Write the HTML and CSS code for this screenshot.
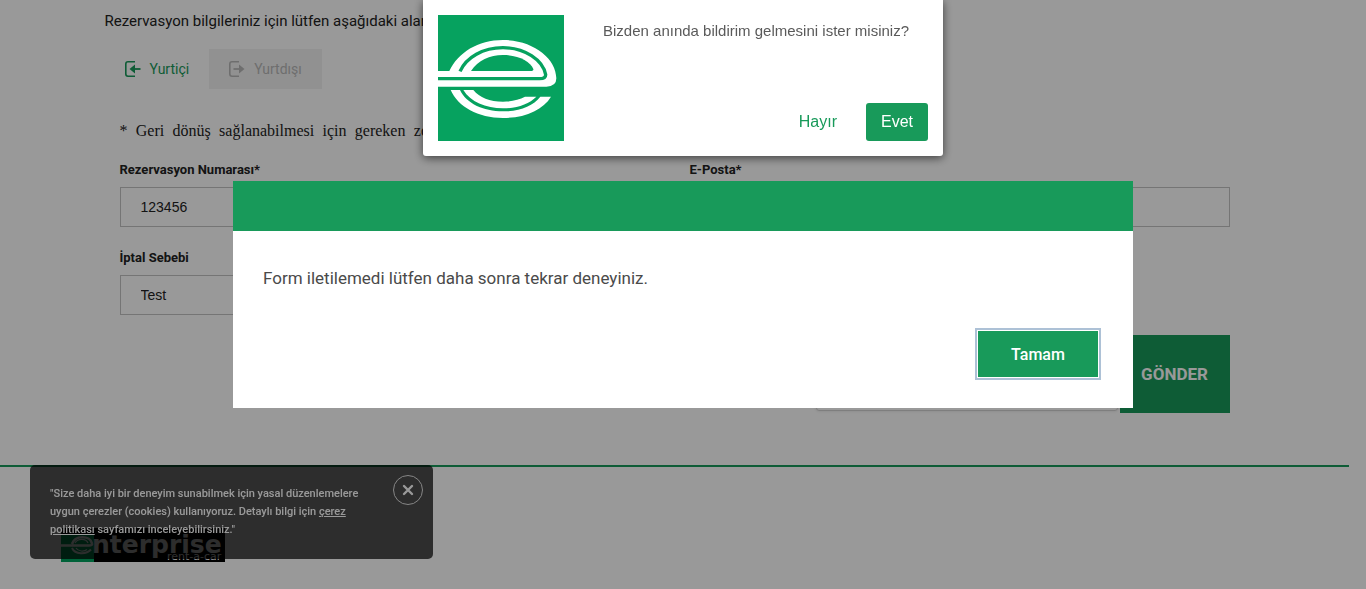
FILE: index.html
```html
<!DOCTYPE html>
<html lang="tr">
<head>
<meta charset="utf-8">
<title>Rezervasyon İptal</title>
<link rel="stylesheet" href="styles.css">
</head>
<body>
<main class="container">
  <p class="intro">Rezervasyon bilgileriniz için lütfen aşağıdaki alanları doldurunuz.</p>
  <div class="tabs">
    <button type="button" class="tab tab-active">
      <svg class="tab-icon" viewBox="0 0 16 16" aria-hidden="true"><path d="M10 .8H3Q.8 .8 .8 3V13Q.8 15.200 3 15.200H10" fill="none" stroke="currentColor" stroke-width="1.600"/><path d="M15.500 8H9" stroke="currentColor" stroke-width="1.800"/><path d="M4.500 8L10 3.500V12.500Z" fill="currentColor"/></svg>
      Yurtiçi
    </button>
    <button type="button" class="tab tab-muted">
      <svg class="tab-icon" viewBox="0 0 16 16" aria-hidden="true"><path d="M10 .8H3Q.8 .8 .8 3V13Q.8 15.200 3 15.200H10" fill="none" stroke="currentColor" stroke-width="1.600"/><path d="M4.500 8H11" stroke="currentColor" stroke-width="1.800"/><path d="M15.500 8L10 3.500V12.500Z" fill="currentColor"/></svg>
      Yurtdışı
    </button>
  </div>
  <form class="form">
    <p class="note">* Geri dönüş sağlanabilmesi için gereken zorunlu alanlar</p>
    <div class="grid">
      <div class="field">
        <label for="number">Rezervasyon Numarası*</label>
        <input id="number" type="text" value="123456">
      </div>
      <div class="field">
        <label for="email">E-Posta*</label>
        <input id="email" type="email">
      </div>
      <div class="field">
        <label for="reason">İptal Sebebi</label>
        <input id="reason" type="text" value="Test">
      </div>
    </div>
    <div class="submit-row">
      <div class="captcha"></div>
      <button type="button" class="submit">GÖNDER</button>
    </div>
  </form>
</main>
<footer class="footer">
  <svg class="brand" viewBox="0 0 164 34" role="img" aria-label="enterprise rent-a-car">
    <rect width="164" height="34" fill="#000"/>
    <rect y="6" width="33" height="28" fill="#00a45f"/>
    <g fill="none" stroke="#fff">
      <path d="M0 17.500H28Q31.500 17.500 31 15.500C29.500 7.500 14 6.500 11 16" stroke-width="2.600"/>
      <path d="M14 15C17 10 25 10.500 27 15" stroke-width="1.300"/>
      <path d="M11 20C14 26.500 25 27 30 21.500" stroke-width="2"/>
      <path d="M15 20C17 23.500 23 24 26 21.500" stroke-width="1.200"/>
    </g>
    <text class="brand-name" x="31" y="25">nterprise</text>
    <text class="brand-sub" x="106" y="32">rent-a-car</text>
  </svg>
</footer>

<aside class="cookie">
  <p class="cookie-text">"Size daha iyi bir deneyim sunabilmek için yasal düzenlemelere uygun çerezler (cookies) kullanıyoruz. Detaylı bilgi için <a href="#">çerez politikası</a> sayfamızı inceleyebilirsiniz."</p>
  <button type="button" class="cookie-close" aria-label="Kapat">
    <svg viewBox="0 0 12 12" aria-hidden="true"><path d="M2 2L10 10M10 2L2 10" stroke="currentColor" stroke-width="2.400" stroke-linecap="round"/></svg>
  </button>
</aside>

<div class="overlay">
  <section class="modal" role="dialog" aria-modal="true">
    <header class="modal-head"></header>
    <div class="modal-body">
      <p class="modal-text">Form iletilemedi lütfen daha sonra tekrar deneyiniz.</p>
      <button type="button" class="modal-ok">Tamam</button>
    </div>
  </section>
</div>

<section class="push" role="dialog">
  <svg class="push-logo" viewBox="45 45 378 378" aria-hidden="true">
    <rect x="45" y="45" width="378" height="378" fill="#06a25f"/>
    <path fill="#fff" d="M45 213H79C105 158 165 120 240 120C330 120 400 175 400 235Q400 260 370 260H45Z"/>
    <path fill="#06a25f" d="M144 213C165 181 200 165 240 165C285 165 322 184 331 207Q332 213 326 213Z"/>
    <path fill="none" stroke="#06a25f" stroke-width="10" d="M45 236H350Q368 236 368 224C360 180 305 143 240 143C180 143 130 172 111 214"/>
    <path fill="#fff" d="M83 270H111C130 310 180 334 240 334C290 334 330 318 352 290H384C360 330 305 354 240 354C165 354 105 320 83 270Z"/>
    <path fill="#fff" d="M121 270H151C170 293 200 305 240 305C265 305 288 299 306 290H340C318 312 282 325 240 325C188 325 142 305 121 270Z"/>
  </svg>
  <div class="push-main">
    <p class="push-text">Bizden anında bildirim gelmesini ister misiniz?</p>
    <div class="push-actions">
      <button type="button" class="push-no">Hayır</button>
      <button type="button" class="push-yes">Evet</button>
    </div>
  </div>
</section>
</body>
</html>
```
FILE: styles.css
```css
:root {
  --green: #189a5a;
  --din: Roboto, "Liberation Sans", sans-serif;
  --arial: "Liberation Sans", Arial, sans-serif;
}
* { box-sizing: border-box; }
body {
  margin: 0;
  padding-right: 17px;
  overflow: hidden;
  background: #fff;
  color: #222;
  font-family: var(--din);
}
p { margin: 0; }
button { border: 0; font-family: inherit; cursor: pointer; }
.container { max-width: 1140px; margin: 0 auto; padding: 9px 0 52px; }
.intro { font-size: 15px; line-height: 24px; }
.tabs { display: flex; margin-top: 16px; }
.tab {
  display: flex;
  align-items: center;
  gap: 9px;
  height: 40px;
  padding: 0 20px;
  background: none;
  font-size: 14px;
}
.tab-active { color: var(--green); }
.tab-muted { background: #f2f2f2; color: #b8b8b8; }
.tab-icon { width: 16px; height: 16px; }
.form { padding: 31px 15px 0; }
.note {
  max-width: 395px;
  font: 16px/22px "Liberation Serif", serif;
  text-align: justify;
  text-align-last: justify;
}
.grid {
  display: grid;
  grid-template-columns: 1fr 1fr;
  gap: 21px 30px;
  margin-top: 18px;
}
.field { display: flex; flex-direction: column; gap: 7px; }
.field label { font-size: 13px; font-weight: 700; line-height: 20px; }
.field input {
  width: 100%;
  height: 40px;
  padding: 0 20px;
  border: 1px solid #c4c4c4;
  background: #fff;
  color: #222;
  font: 14px var(--arial);
}
.submit-row { display: flex; justify-content: flex-end; gap: 2px; margin-top: 20px; }
.captcha {
  width: 302px;
  height: 76px;
  border: 1px solid #d3d3d3;
  border-radius: 3px;
  box-shadow: 0 0 3px #ddd;
}
.submit {
  height: 78px;
  width: 110px;
  background: var(--green);
  color: #fff;
  font-size: 17px;
  font-weight: 700;
}
.footer { border-top: 2px solid var(--green); padding: 61px 61px 26px; }
.brand { display: block; width: 164px; height: 34px; }
.brand-name { fill: #fff; font: bold 25px "DejaVu Sans", sans-serif; }
.brand-sub { fill: #fff; font: 11px "DejaVu Sans", sans-serif; }

.cookie {
  position: fixed;
  left: 30px;
  bottom: 30px;
  display: flex;
  align-items: flex-start;
  gap: 16px;
  width: 403px;
  padding: 10px 10px 10px 20px;
  border-radius: 5px;
  background: rgba(0, 0, 0, 0.7);
  color: #fff;
}
.cookie-text { flex: 1; padding: 10px 0; font-size: 11px; font-weight: 500; line-height: 18px; }
.cookie-text a { color: inherit; }
.cookie-close {
  display: grid;
  place-items: center;
  width: 30px;
  height: 30px;
  padding: 0;
  border: 1px solid #ddd;
  border-radius: 50%;
  background: none;
  color: #fff;
}
.cookie-close svg { width: 12px; height: 12px; }

.overlay {
  position: fixed;
  inset: 0;
  display: grid;
  place-items: center;
  background: rgba(0, 0, 0, 0.4);
}
.modal { width: min(900px, 100%); background: #fff; }
.modal-head { height: 50px; background: var(--green); }
.modal-body {
  display: flex;
  flex-direction: column;
  gap: 41px;
  padding: 35px 35px 31px 30px;
}
.modal-text { color: #4a4a4a; font-size: 17px; line-height: 24px; }
.modal-ok {
  align-self: flex-end;
  width: 120px;
  height: 46px;
  background: var(--green);
  box-shadow: 0 0 0 1px #fff, 0 0 0 3px #adc1d6;
  color: #fff;
  font-size: 16px;
  font-weight: 500;
}

.push {
  position: fixed;
  top: 0;
  left: 50%;
  display: flex;
  width: 520px;
  margin-left: -260px;
  padding: 15px;
  border-radius: 0 0 3px 3px;
  background: #fff;
  box-shadow: 0 2px 10px rgba(0, 0, 0, 0.6);
  font-family: var(--arial);
}
.push-logo { width: 126px; height: 126px; }
.push-main {
  flex: 1;
  display: flex;
  flex-direction: column;
  justify-content: space-between;
  padding-left: 20px;
}
.push-text { padding-top: 6px; color: #5a5a5a; font-size: 15px; line-height: 20px; text-align: center; }
.push-actions { display: flex; justify-content: flex-end; gap: 14px; }
.push-actions button { height: 38px; padding: 0 15px; border-radius: 3px; font-size: 16px; }
.push-no { background: none; color: var(--green); }
.push-yes { background: var(--green); color: #fff; }
```
